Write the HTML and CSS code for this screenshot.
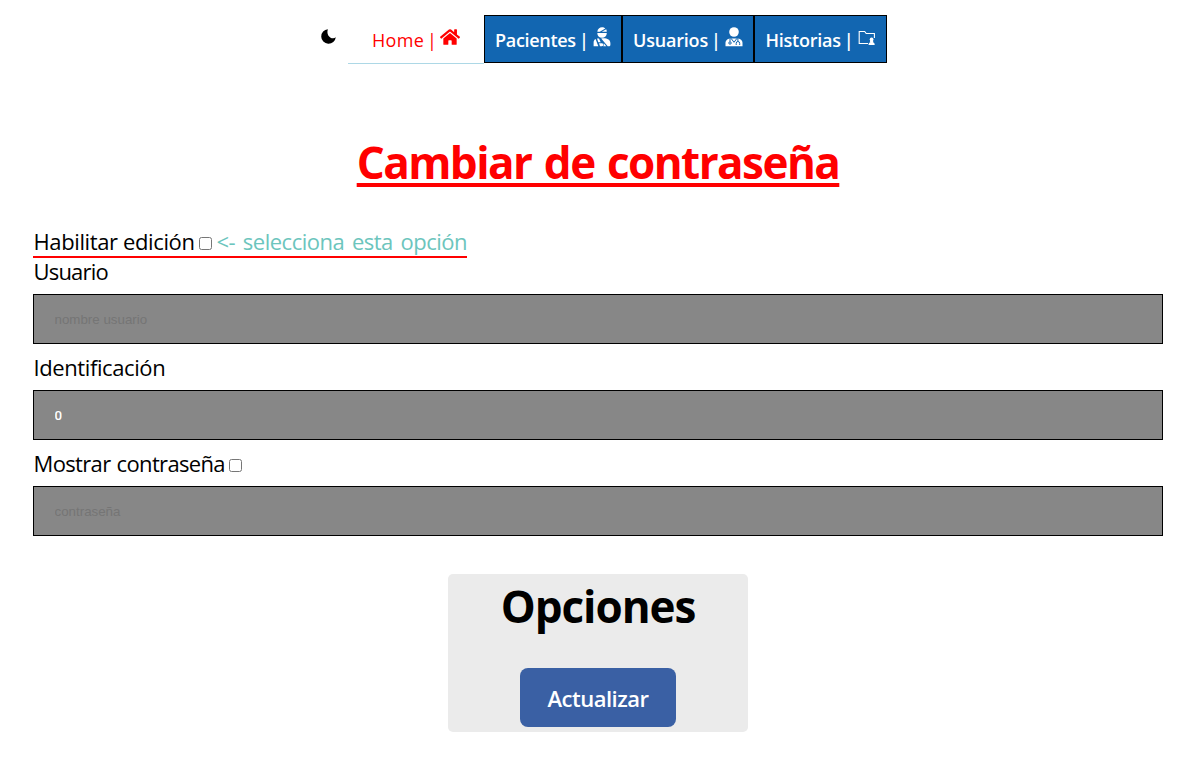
FILE: index.html
```html
<!DOCTYPE html>
<html lang="es">
<head>
<meta charset="utf-8">
<title>Cambiar de contraseña</title>
<link rel="stylesheet" href="styles.css">
</head>
<body>
<nav class="nav">
  <svg class="moon" viewBox="0 0 15 15"><path d="M6.900.2A7.300 7.300 0 1 0 14.800 8.300C11 11.400 4.600 6.700 6.900.2Z" fill="#000"/></svg>
  <a class="tab home"><span class="t-home">Home |</span><svg class="ic ic-home" viewBox="0 0 576 512"><path fill="currentColor" d="M280 148 96 300v164a16 16 0 0 0 16 16l112-.300a16 16 0 0 0 16-16V368a16 16 0 0 1 16-16h64a16 16 0 0 1 16 16v96a16 16 0 0 0 16 16l112 .300a16 16 0 0 0 16-16V300L296 148a12 12 0 0 0-16 0zM572 251l-84-69V44a12 12 0 0 0-12-12h-56a12 12 0 0 0-12 12v72l-89-74a48 48 0 0 0-61 0L4 251a12 12 0 0 0-1 17l25 31a12 12 0 0 0 17 2L280 107a12 12 0 0 1 15 0l235 194a12 12 0 0 0 17-2l26-31a12 12 0 0 0-1-17z"/></svg></a>
  <a class="tab blue pac"><span class="t-pac">Pacientes |</span><svg class="ic" viewBox="0 0 18 20"><g fill="currentColor"><path d="M4.300 4.700C4.700 1.800 6.600.200 9 .200c1.300 0 2.500.500 3.300 1.300L6.800 4.700zM8.800 4.700l4.400-2.400c.4.700.6 1.500.6 2.400zM4.300 5.900h9.500C13.800 9 11.800 10.700 9 10.700S4.300 9 4.300 5.900z"/><path d="M.6 19.300v-3.500c0-1.800.7-3 2-3.700l2.700 7.200zM4 11.600c.7-.2 1.400-.2 2-.1l1.700 3.700H5.300zM8 11.500c5-.700 9.400.5 9.400 4.700v1.500c0 1-.7 1.600-1.700 1.600h-1L8.200 11.500zM6 16.300h2.800c2.300 0 2.300 3 0 3H7z"/><path d="M10.200 19.300c.9-1 .9-2.200.4-3.200l2.700 3.200z"/></g></svg></a>
  <a class="tab blue usu"><span class="t-usu">Usuarios |</span><svg class="ic" viewBox="0 0 18 20"><g fill="currentColor"><circle cx="9" cy="5" r="4.800"/><path d="M.5 19.200v-3.500c0-2.300 1.700-4 4.300-4.300h8.400c2.600.3 4.300 2 4.300 4.300v3.500z"/></g><g fill="none" stroke="#1266b1" stroke-width="1"><path d="M5 11.300v3.300M12.900 11.300v3M6 11.300l3 4 3-4"/><circle cx="5" cy="16" r="1.200"/><path d="M11.200 18v-1.500a1.700 2 0 0 1 3.500 0V18"/></g></svg></a>
  <a class="tab blue his"><span class="t-his">Historias |</span><svg class="ic" viewBox="0 0 18 20"><path d="M10 16.500H1.200V4.500h5.500l1.500 2h8.200V11" fill="none" stroke="currentColor" stroke-width="1.100"/><circle cx="13.600" cy="12.400" r="1.900" fill="currentColor"/><path d="M10.500 18c.1-1.800 1-2.500 1.800-2.700l-.5-1.300h3.600l-.5 1.300c1 .2 1.800.9 1.800 2.700z" fill="currentColor"/></svg></a>
</nav>
<h1 class="title"><span class="t-title">Cambiar de contraseña</span></h1>
<form class="form">
  <div class="enable"><span class="t-hab">Habilitar edición</span><input class="check" type="checkbox"><span class="hint">&lt;- selecciona esta opción</span></div>
  <label class="label"><span class="t-user">Usuario</span></label>
  <input class="field" type="text" placeholder="nombre usuario" disabled>
  <label class="label"><span class="t-id">Identificación</span></label>
  <input class="field" type="text" value="0" disabled>
  <div class="label"><span class="t-show">Mostrar contraseña</span><input class="check" type="checkbox"></div>
  <input class="field" type="password" placeholder="contraseña" disabled>
</form>
<section class="options">
  <h2 class="heading"><span class="t-opt">Opciones</span></h2>
  <button class="update">Actualizar</button>
</section>
</body>
</html>
```
FILE: styles.css
```css
* { box-sizing: border-box; }
body { margin: 0; background: #fff; color: #000; font-family: "Open Sans", "Noto Sans", sans-serif; }
span { white-space: nowrap; }
.nav { display: flex; padding: 15px 0 0 321px; height: 64px; }
.moon { width: 15px; height: 15px; margin: 14px 12px 0 0; flex: none; }
.tab { display: flex; flex: none; height: 48px; font-size: 18px; font-weight: 600; line-height: 24px; padding: 13px 0 0 10px; }
.tab span { flex: none; }
.home { width: 136px; height: 49px; padding-left: 24px; color: #f00; font-weight: 500; border-bottom: 1px solid #add8e6; }
.t-home { width: 63px; letter-spacing: .3px; word-spacing: -2px; }
.blue { background: #1266b1; color: #fff; border: 1px solid #000; padding-top: 12px; }
.pac { width: 138px; }
.usu { width: 132px; }
.his { width: 133px; padding-left: 10.500px; }
.t-pac { width: 93px; letter-spacing: -.3px; word-spacing: -1.300px; }
.t-usu { width: 87px; letter-spacing: -.2px; word-spacing: -1.300px; }
.t-his { width: 87.500px; letter-spacing: -.25px; word-spacing: -1.300px; }
.ic { width: 18px; height: 20px; margin: -1px 0 0 5px; flex: none; }
.ic-home { width: 20px; height: 18px; margin-top: 0; }
.title { margin: 65px 0 0; height: 66px; text-align: center; font-size: 44px; line-height: 66px; font-weight: 700; color: #f00; padding-left: 2px; }
.t-title { letter-spacing: -1.550px; word-spacing: 2.500px; text-decoration: underline; text-decoration-thickness: 4px; text-underline-offset: 4px; text-decoration-skip-ink: none; }
.form { display: flex; flex-direction: column; align-items: flex-start; padding: 33px 31px 0 33px; font-size: 22px; line-height: 27px; }
.enable { display: flex; height: 30px; border-bottom: 2px solid #f00; }
.label { display: flex; height: 30px; margin-bottom: 6px; }
.form span { padding-left: .5px; }
.t-hab { width: 162px; letter-spacing: -.38px; }
.t-user { letter-spacing: -.8px; }
.t-id { letter-spacing: -.4px; }
.t-show { width: 192px; letter-spacing: -.65px; word-spacing: 1px; }
.check { width: 13px; height: 13px; margin: 9px 4px 0; flex: none; }
.hint { width: 251px; color: #6cc5bd; letter-spacing: -.5px; word-spacing: 2.500px; }
.field { width: 100%; height: 50px; margin: 0 0 10px; padding: 0 20.500px; border: 1px solid #000; background: #878787; color: #fff; font: 500 13.333px Roboto, sans-serif; }
.field::placeholder { color: #757575; opacity: 1; font: 13.333px "Liberation Sans", sans-serif; }
.options { display: flex; flex-direction: column; align-items: center; width: 300px; height: 158px; margin: 28px 0 0 448px; border-radius: 5px; background: #ebebeb; }
.heading { margin: 0 0 28px; font-size: 44px; line-height: 65px; height: 66px; letter-spacing: -1.050px; }
.update { width: 156px; height: 59px; padding: 0; border: 0; border-radius: 8px; background: #3a60a4; color: #fff; font: 600 22px "Open Sans", sans-serif; letter-spacing: -.5px; }
```
